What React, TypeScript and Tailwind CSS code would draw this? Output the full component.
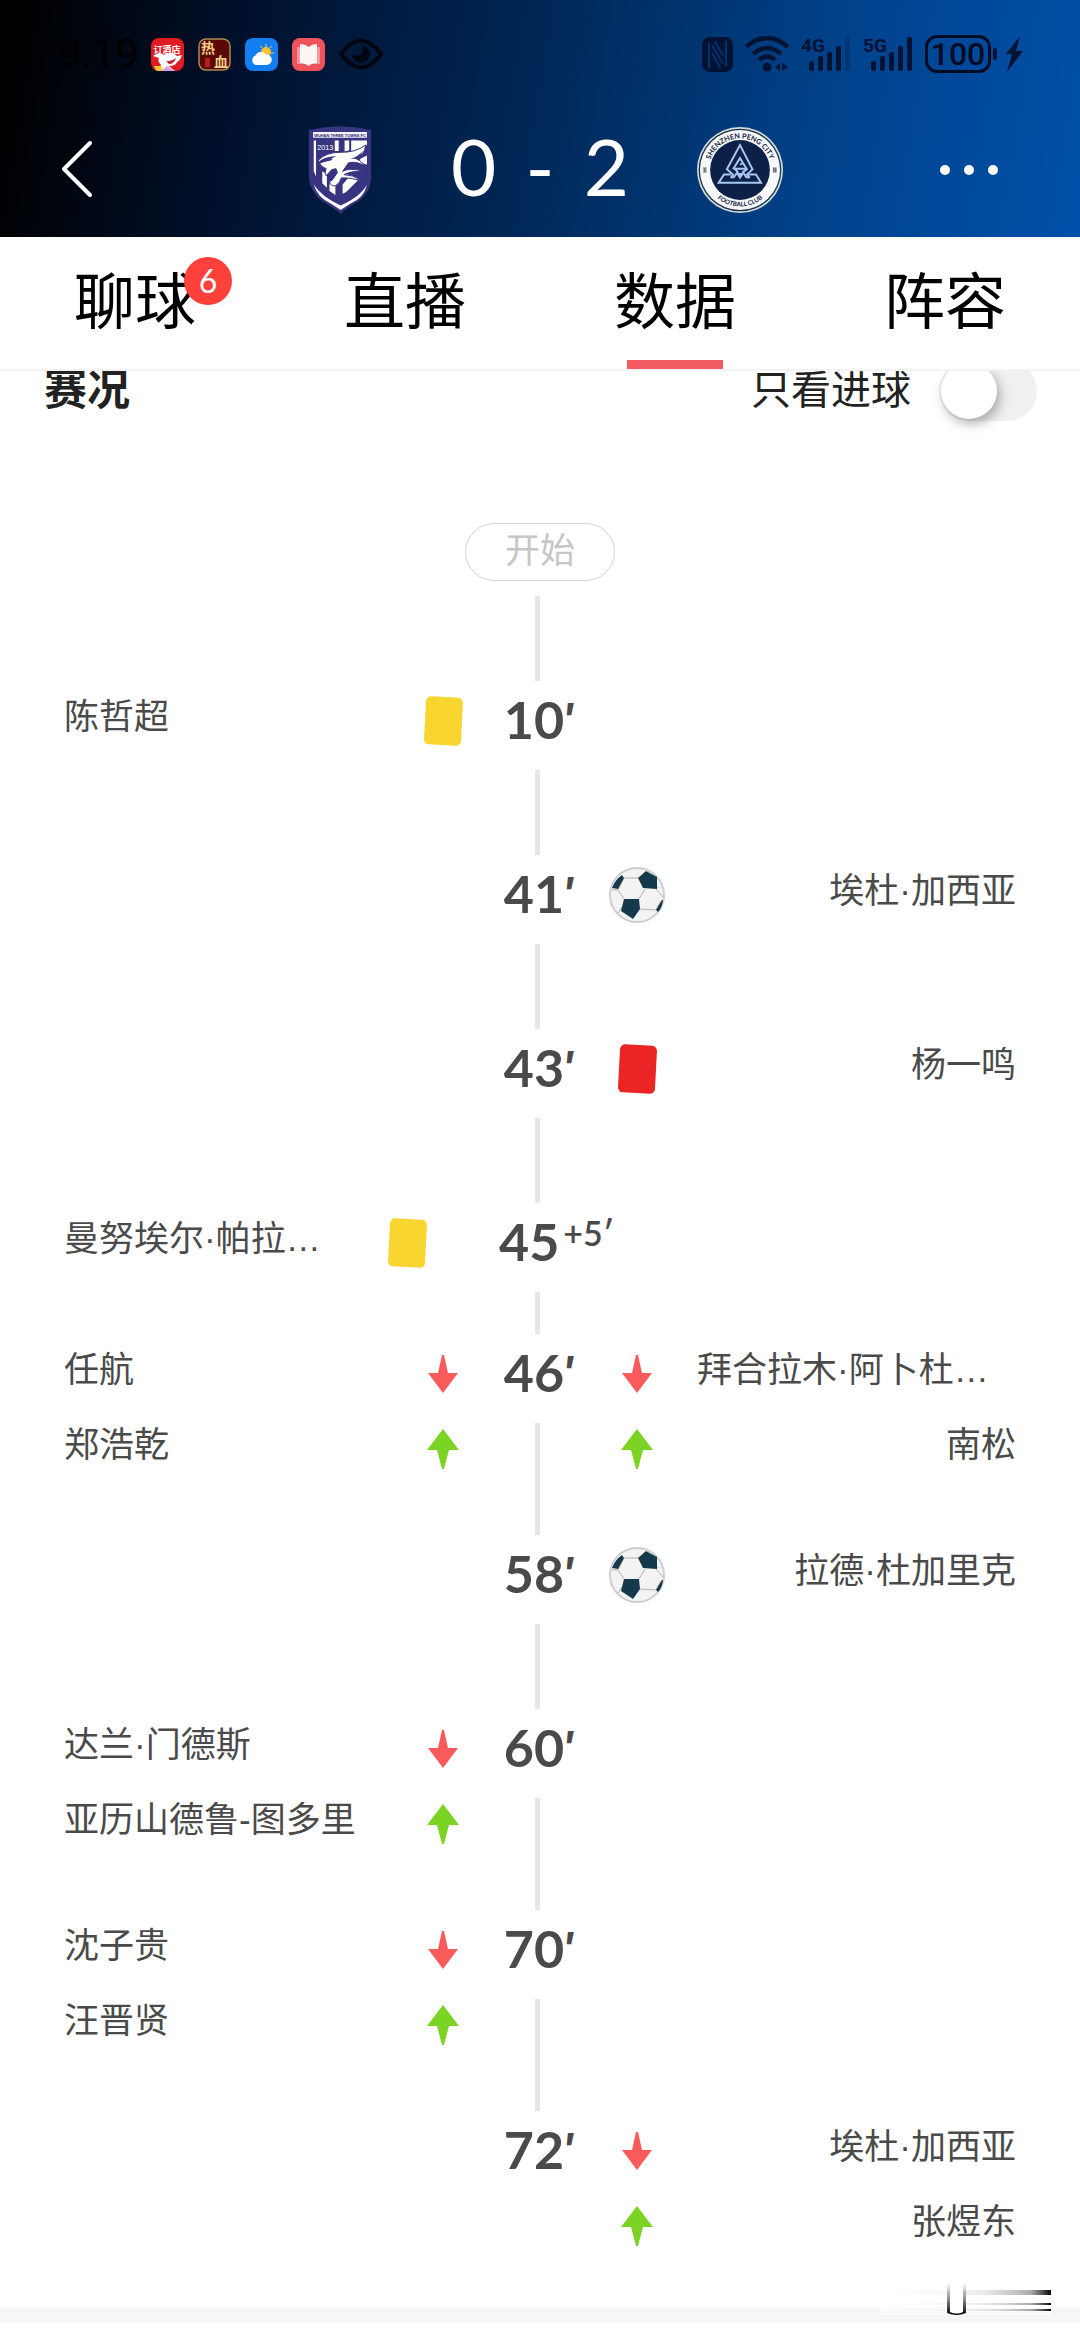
import { useState } from "react";
import clsx from "clsx";

type Kind = "yellow" | "red" | "goal" | "out" | "in";
type Entry = { kind: Kind; name: string; cut?: boolean };
type MatchEvent = {
  minute: string;
  extra?: string;
  home?: Entry[];
  away?: Entry[];
  line: string;
};

const tabs = [
  { label: "聊球", badge: 6 },
  { label: "直播" },
  { label: "数据" },
  { label: "阵容" },
];

const events: MatchEvent[] = [
  { minute: "10", home: [{ kind: "yellow", name: "陈哲超" }], line: "h-[85px]" },
  { minute: "41", away: [{ kind: "goal", name: "埃杜·加西亚" }], line: "h-[85px]" },
  { minute: "43", away: [{ kind: "red", name: "杨一鸣" }], line: "h-[85px]" },
  { minute: "45", extra: "+5′", home: [{ kind: "yellow", name: "曼努埃尔·帕拉…" }], line: "h-[42px]" },
  {
    minute: "46",
    home: [{ kind: "out", name: "任航" }, { kind: "in", name: "郑浩乾" }],
    away: [{ kind: "out", name: "拜合拉木·阿卜杜…", cut: true }, { kind: "in", name: "南松" }],
    line: "h-[112px]",
  },
  { minute: "58", away: [{ kind: "goal", name: "拉德·杜加里克" }], line: "h-[85px]" },
  {
    minute: "60",
    home: [{ kind: "out", name: "达兰·门德斯" }, { kind: "in", name: "亚历山德鲁-图多里" }],
    line: "h-[112px]",
  },
  {
    minute: "70",
    home: [{ kind: "out", name: "沈子贵" }, { kind: "in", name: "汪晋贤" }],
    line: "h-[112px]",
  },
  {
    minute: "72",
    away: [{ kind: "out", name: "埃杜·加西亚" }, { kind: "in", name: "张煜东" }],
    line: "",
  },
];

function HomeCrest() {
  return (
    <svg viewBox="50 48 200 268" className="h-[88px] w-[66px]" aria-label="Wuhan Three Towns FC">
      <path d="M55 60 Q150 38 245 60 V208 Q242 252 205 278 Q170 298 152 315 Q132 298 98 278 Q60 250 55 208Z" fill="#37357f" />
      <path d="M68 66 H232 V84 H68Z" fill="#f4f4fb" />
      <text x="150" y="80" textAnchor="middle" fontSize="12" fontWeight="700" fill="#2a2870" fontFamily="Liberation Sans">
        WUHAN THREE TOWNS FC
      </text>
      <path d="M70 92 H77 V202 L70 186Z M134 92 H146 V124 H134Z M164 92 L178 92 V122 L164 126Z M184 92 H232 V106 L205 124 H184Z" fill="#fff" />
      <path d="M96 186 L110 196 V236 L96 222Z M118 222 L136 224 V258 L118 246Z M158 226 L182 198 L204 214 L168 250 L158 254Z M212 148 L232 138 V166 L210 158Z" fill="#fff" />
      <path d="M82 100 H130 V126 H82Z" fill="#37357f" />
      <text x="105" y="122" textAnchor="middle" fontSize="22" fill="#fff" fontFamily="Liberation Sans">
        2013
      </text>
      <path
        d="M84 152 Q108 128 150 128 Q196 130 228 106 Q226 138 196 146 Q214 152 228 172 Q204 154 176 160 L158 186 Q180 174 222 186 Q186 184 162 196 Q190 196 214 214 Q178 204 154 206 Q150 222 136 230 Q122 232 118 218 Q128 214 134 202 L142 190 L138 178 Q124 178 116 190 L108 200 Q102 188 108 178 Q90 172 88 160 L126 150 Q104 150 88 160Z"
        fill="#fff"
        stroke="#37357f"
        strokeWidth="3"
      />
      <path d="M86 155 Q108 140 138 140 Q118 152 92 160Z M182 148 Q206 140 220 124 Q214 140 194 148Z" fill="#37357f" />
      <path d="M70 226 Q92 262 152 290 Q214 262 232 226 Q224 266 182 284 L152 304 L122 284 Q80 264 70 226Z" fill="#fff" />
    </svg>
  );
}

function AwayCrest() {
  return (
    <svg viewBox="46 48 266 268" className="size-[88px]" aria-label="Shenzhen Peng City Football Club">
      <defs>
        <path id="arcTop" d="M83 182 A96 96 0 0 1 275 182" />
        <path id="arcBottom" d="M68 182 A111 111 0 0 0 290 182" />
      </defs>
      <circle cx="179" cy="182" r="131" fill="#d3dbd8" />
      <circle cx="179" cy="182" r="126" fill="#173248" />
      <circle cx="179" cy="182" r="122" fill="#f7f8fb" />
      <circle cx="179" cy="182" r="91" fill="#0c2048" />
      <g fontFamily="Lato" fontWeight="700" fontSize="22" fill="#14213d" textAnchor="middle">
        <text>
          <textPath href="#arcTop" startOffset="50%">SHENZHEN PENG CITY</textPath>
        </text>
        <text fontSize="19">
          <textPath href="#arcBottom" startOffset="50%">FOOTBALL CLUB</textPath>
        </text>
      </g>
      <path d="M66 176 h12 M66 182 h12 M66 188 h12 M72 176 v12 M279 176 h12 M279 182 h12 M279 188 h12 M282 176 v12 M288 176 v12" stroke="#14213d" strokeWidth="2" />
      <g fill="none" stroke="#a9c6f2" strokeWidth="6">
        <path d="M151 206 L158 196 L139 180 L179 106 L217 180 L200 196 L207 206" />
        <path d="M151 196 H130 L114 221 H243 L228 196 H203" />
        <path d="M158 180 L179 146 L199 178 H163 L172 188 L160 204 H151 M179 166 L190 160 M200 180 L188 188 L198 204 H210" />
      </g>
      <path d="M167 191 H192 L179 211Z" fill="#a9c6f2" />
    </svg>
  );
}

function Signal({ label, weak }: { label: string; weak?: boolean }) {
  return (
    <svg viewBox="0 0 50 38" className="h-[38px] w-[50px]" fill="currentColor">
      <text x="0" y="17" fontSize="19" fontWeight="700" fontFamily="Roboto">
        {label}
      </text>
      <rect x="8" y="26" width="5" height="10" rx="2" />
      <rect x="17" y="21" width="5" height="15" rx="2" />
      <rect x="26" y="17" width="5" height="19" rx="2" />
      <rect x="35" y="11" width="5" height="25" rx="2" />
      <rect x="44" y="2" width="5" height="34" rx="2" opacity={weak ? 0.25 : 1} />
    </svg>
  );
}

function StatusBar() {
  return (
    <div className="flex h-[108px] items-center justify-between pr-[57px] pl-[58px]">
      <div className="flex items-center gap-[14px]">
        <span className="w-[79px] font-['Roboto','Liberation_Sans',sans-serif] text-[42px] leading-[48px] text-black">9:19</span>
        <svg viewBox="0 0 33 33" className="size-[33px] rounded-lg">
          <rect width="33" height="33" fill="#e21a22" />
          <text x="16" y="15" textAnchor="middle" fontSize="9" fontWeight="700" fill="#fff" fontFamily="Noto Sans CJK SC">
            订酒店
          </text>
          <path d="M2 18 Q8 13 13 17 Q20 12 26 18 L31 17 Q29 23 26 24 Q25 28 18 28 L24 33 H7 L10 27 Q6 23 8 20Z" fill="#fff" />
          <path d="M15 23 Q20 24 25 20 Q23 26 18 26Z" fill="#c3222b" />
          <path d="M3 28 h7 l2 5 H5Z" fill="#f5c531" />
          <path d="M10 33 L16 28 L24 33Z" fill="#d6a3e0" />
        </svg>
        <svg viewBox="0 0 33 33" className="size-[33px]">
          <rect x="1" y="1" width="31" height="31" rx="7" fill="#5a0907" stroke="#a98953" strokeWidth="1.5" />
          <g fill="#f0cf86" fontWeight="700" fontFamily="Noto Sans CJK SC">
            <text x="3" y="15" fontSize="14">热</text>
            <text x="16" y="29" fontSize="14">血</text>
          </g>
          <rect x="7" y="20" width="5" height="9" fill="#b3201a" />
        </svg>
        <svg viewBox="0 0 33 33" className="size-[33px]">
          <rect width="33" height="33" rx="8" fill="#137ef2" />
          <path d="M21 6 v3 M27 8 l-2 2 M29 15 h-3 M15 8 l2 2" stroke="#f7cf4a" strokeWidth="1" />
          <circle cx="21" cy="14" r="5" fill="#fbc02d" />
          <path d="M11 27 a5 5 0 0 1-.5-9.500 a6 6 0 0 1 10.500-1 a5 5 0 1 1 1 10.500Z" fill="#fff" />
        </svg>
        <svg viewBox="0 0 33 33" className="size-[33px]">
          <rect width="33" height="33" rx="8" fill="#f0525b" />
          <path d="M5 9 H28 V26 H5Z" fill="#fff" opacity=".4" />
          <path d="M8 6 Q13 6 16.500 9 Q20 6 25 6 V25 Q20 25 16.500 28 Q13 25 8 25Z" fill="#fff" opacity=".9" />
        </svg>
        <svg viewBox="0 0 44 32" className="h-8 w-11 text-[#000611]">
          <path d="M2 16 Q22 -11 42 16 Q22 43 2 16Z" fill="none" stroke="currentColor" strokeWidth="4" />
          <path d="M22 7 a9 9 0 1 1-9 9 a6 6 0 0 0 9-9Z" fill="currentColor" />
        </svg>
      </div>
      <div className="flex items-center gap-3 text-[#021233]">
        <svg viewBox="0 0 31 35" className="h-[35px] w-[31px]">
          <rect width="31" height="35" rx="8" fill="currentColor" />
          <path d="M7 31 V6 M10 8 L21 27 M10 16 L18 31 M13 4 L21 19 M24 4 V29" fill="none" stroke="#003170" strokeWidth="2" />
        </svg>
        <svg viewBox="0 0 44 36" className="h-9 w-11" fill="none" stroke="currentColor" strokeWidth="4.500">
          <path d="M1 11 Q22 -7 43 11 M8 18 Q22 6 36 18 M14 24 Q22 17 30 24" />
          <circle cx="22" cy="31" r="4.500" fill="currentColor" stroke="none" />
          <path d="M30 31 l5-4 v8Z M37 27 l6 4 l-6 4Z" fill="currentColor" stroke="none" />
        </svg>
        <Signal label="4G" weak />
        <Signal label="5G" />
        <div className="flex items-center gap-[2px]">
          <span className="flex h-[38px] w-[66px] items-center justify-center rounded-xl border-3 border-current font-['Roboto','Liberation_Sans',sans-serif] text-[32px] leading-none font-medium text-[#010b24]">
            100
          </span>
          <span className="h-3 w-1 rounded-sm bg-current" />
          <svg viewBox="0 0 18 36" className="ml-[6px] h-9 w-[18px]" fill="currentColor">
            <path d="M15 0 L1 18 H7 L2 36 L18 15 H11Z" />
          </svg>
        </div>
      </div>
    </div>
  );
}

function EventIcon({ kind }: { kind: Kind }) {
  if (kind === "yellow" || kind === "red") {
    return (
      <svg viewBox="0 0 56 56" className="size-14">
        <rect
          x="10"
          y="4"
          width="37"
          height="48"
          rx="5"
          transform="rotate(3 28 28)"
          fill={kind === "red" ? "#eb2525" : "#f8d52f"}
        />
      </svg>
    );
  }
  if (kind === "goal") {
    return (
      <svg viewBox="0 0 56 56" className="size-14">
        <circle cx="28" cy="28" r="27" fill="#f3f3f3" stroke="#cdced3" strokeWidth="2" />
        <path
          d="M15 11 L29 11 M3 23 L9 23 L15 32 M47 22 L54 30 M36 22 L30 32 M13 40 L9 46 M31 42 L47 43 L52 34 M9 23 L15 11 M47 22 L49 20"
          stroke="#b9b2a4"
          fill="none"
        />
        <path d="M37 4 L48 10 V22 L34 21 L29 11Z" fill="#14394a" />
        <path d="M15 32 L30 32 L31 42 L24 52 L12 44Z" fill="#14394a" />
        <path d="M13 8 L15 11 L9 22 L3 21 Q6 13 13 8Z M53 33 L47 43 L49 45 Q53 41 54 33Z" fill="#14394a" />
      </svg>
    );
  }
  if (kind === "out") {
    return (
      <svg viewBox="0 0 56 56" className="size-14">
        <path d="M27 9 H29 L33 27 H43 L28 47 L13 27 H23Z" fill="#f95a5a" />
      </svg>
    );
  }
  return (
    <svg viewBox="0 0 56 56" className="size-14">
      <path d="M28 8 L44 29 H34 L29 48 H27 L22 29 H12Z" fill="#7bd424" />
    </svg>
  );
}

function Side({ entries = [], away, shifted }: { entries?: Entry[]; away?: boolean; shifted?: boolean }) {
  return (
    <ul className="min-w-0">
      {entries.map((entry) => (
        <li
          key={entry.name}
          className={clsx("flex h-[75px] items-center gap-8 pt-1", away && "flex-row-reverse", shifted && "pr-9")}
        >
          <span
            className={clsx(
              "flex-1 pb-2 font-['Liberation_Sans','Noto_Sans_CJK_SC',sans-serif] text-[35px] leading-[48px] whitespace-nowrap",
              away && !entry.cut && "text-right"
            )}
          >
            {entry.name}
          </span>
          <EventIcon kind={entry.kind} />
        </li>
      ))}
    </ul>
  );
}

function App() {
  const [active, setActive] = useState("数据");
  const [goalsOnly, setGoalsOnly] = useState(false);

  const shown = goalsOnly
    ? events.filter((e) => [...(e.home || []), ...(e.away || [])].some((x) => x.kind === "goal"))
    : events;

  return (
    <div className="relative bg-white font-['Lato','Noto_Sans_CJK_SC',sans-serif]">
      {/* header */}
      <header className="bg-[linear-gradient(100deg,#000_2%,#001230_24%,#002858_50%,#00418a_75%,#0051aa_100%)]">
        <StatusBar />
        <div className="grid h-[129px] grid-cols-[1fr_488px_1fr] items-center pb-[5px]">
          <button className="ml-[60px] w-9" aria-label="返回">
            <svg viewBox="0 0 36 60" className="h-[60px] w-9" fill="none" stroke="#fff" strokeWidth="4" strokeLinecap="round" strokeLinejoin="round">
              <path d="M30 3 L4 29 L30 55" />
            </svg>
          </button>
          <div className="flex items-center justify-between">
            <div className="flex w-[88px] justify-center">
              <HomeCrest />
            </div>
            <div className="flex w-[178px] items-center justify-between pb-2 text-[78px] leading-[88px] text-white">
              <span>0</span>
              <span>-</span>
              <span>2</span>
            </div>
            <AwayCrest />
          </div>
          <button className="mr-[82px] flex gap-[14px] justify-self-end" aria-label="更多">
            <span className="size-[10px] rounded-full bg-white" />
            <span className="size-[10px] rounded-full bg-white" />
            <span className="size-[10px] rounded-full bg-white" />
          </button>
        </div>
      </header>
      {/* tabs */}
      <nav className="relative z-10 grid h-[134px] grid-cols-4 border-b-2 border-[#f3f3f3] bg-white">
        {tabs.map((tab) => (
          <button key={tab.label} onClick={() => setActive(tab.label)} className="flex flex-col items-center justify-between">
            <span className="relative pt-[20px] text-[61px] leading-[88px] text-black">
              {tab.label}
              {tab.badge && (
                <span className="absolute top-5 left-[110px] flex size-12 items-center justify-center rounded-full bg-[#ff403b] text-[32px] leading-none text-white">
                  {tab.badge}
                </span>
              )}
            </span>
            <span className={clsx("h-[9px] w-24", active === tab.label && "bg-[#f25b5f]")} />
          </button>
        ))}
      </nav>
      {/* timeline */}
      <main className="-mt-[10px]">
        <div className="flex h-[60px] items-center justify-between pr-[43px] pl-11">
          <h2 className="pb-1 text-[43px] leading-[60px] font-bold text-[#222]">赛况</h2>
          <label className="flex items-center gap-7 text-[40px] leading-[60px] text-[#222]">
            <span className="pb-1">只看进球</span>
            <input
              type="checkbox"
              checked={goalsOnly}
              onChange={(e) => setGoalsOnly(e.target.checked)}
              className="h-[60px] w-[98px] appearance-none rounded-full bg-[#f0f0f0] p-[2px] before:block before:size-14 before:rounded-full before:bg-white before:shadow-[3px_5px_12px_rgba(0,0,0,0.3)] before:content-[''] checked:bg-[#f25b5f] checked:before:ml-auto"
            />
          </label>
        </div>
        <div className="mt-[102px] flex flex-col items-center">
          <div className="flex h-[58px] w-[150px] justify-center rounded-full border border-[#d6d6d6] text-[35px] leading-[50px] text-[#c6c6c6]">
            开始
          </div>
          <div className="mt-[15px] mr-[5px] h-[85px] w-[5px] bg-[#e6e6e6]" />
        </div>
        <ol className="px-16 text-[#4a4a4a]">
          {shown.map((event) => (
            <li key={event.minute} className="grid grid-cols-[1fr_138px_1fr]">
              <Side entries={event.home} shifted={!!event.extra} />
              <div className="flex flex-col items-center">
                <div
                  className={clsx(
                    "flex h-[89px] w-full text-[52px] leading-[76px] font-bold whitespace-nowrap",
                    event.extra ? "gap-1 pl-7" : "justify-center"
                  )}
                >
                  {event.minute}
                  {event.extra ? (
                    <span className="text-[34px] leading-[60px] font-semibold">{event.extra}</span>
                  ) : (
                    <span className="font-['Inter','Noto_Sans',sans-serif] text-[44px]">′</span>
                  )}
                </div>
                <div className={clsx("mr-[5px] w-[5px] bg-[#e6e6e6]", event.line)} />
              </div>
              <Side entries={event.away} away />
            </li>
          ))}
        </ol>
      </main>
      <div className="mt-[46px] h-4 bg-[#f5f6f7]" />
      <div className="h-[15px] bg-white" />
      {/* corner streaks */}
      <svg viewBox="0 0 180 36" className="absolute right-6 bottom-[21px] h-9 w-[180px]">
        <defs>
          <linearGradient id="streak">
            <stop offset="0" stopColor="#fff" stopOpacity="0" />
            <stop offset=".6" stopColor="#999" stopOpacity=".2" />
            <stop offset=".88" stopColor="#555" stopOpacity=".5" />
            <stop offset="1" stopColor="#000" />
          </linearGradient>
          <linearGradient id="stem" x2="0" y2="1">
            <stop offset="0" stopColor="#333" stopOpacity="0" />
            <stop offset="1" stopColor="#000" />
          </linearGradient>
        </defs>
        <path d="M4 0 H176 V34 H4Z" fill="#fff" opacity=".6" />
        <rect x="4" y="9" width="171" height="5" fill="url(#streak)" />
        <rect x="4" y="22" width="171" height="2" fill="url(#streak)" />
        <rect x="4" y="28" width="171" height="2" fill="url(#streak)" />
        <path d="M75 1 H87 V32 H75Z" fill="#fff" />
        <path d="M71 2 H74 V31 Q81 34 87 31 V2 H90 V32 Q81 36 71 32Z" fill="url(#stem)" />
      </svg>
    </div>
  );
}

export default App;
